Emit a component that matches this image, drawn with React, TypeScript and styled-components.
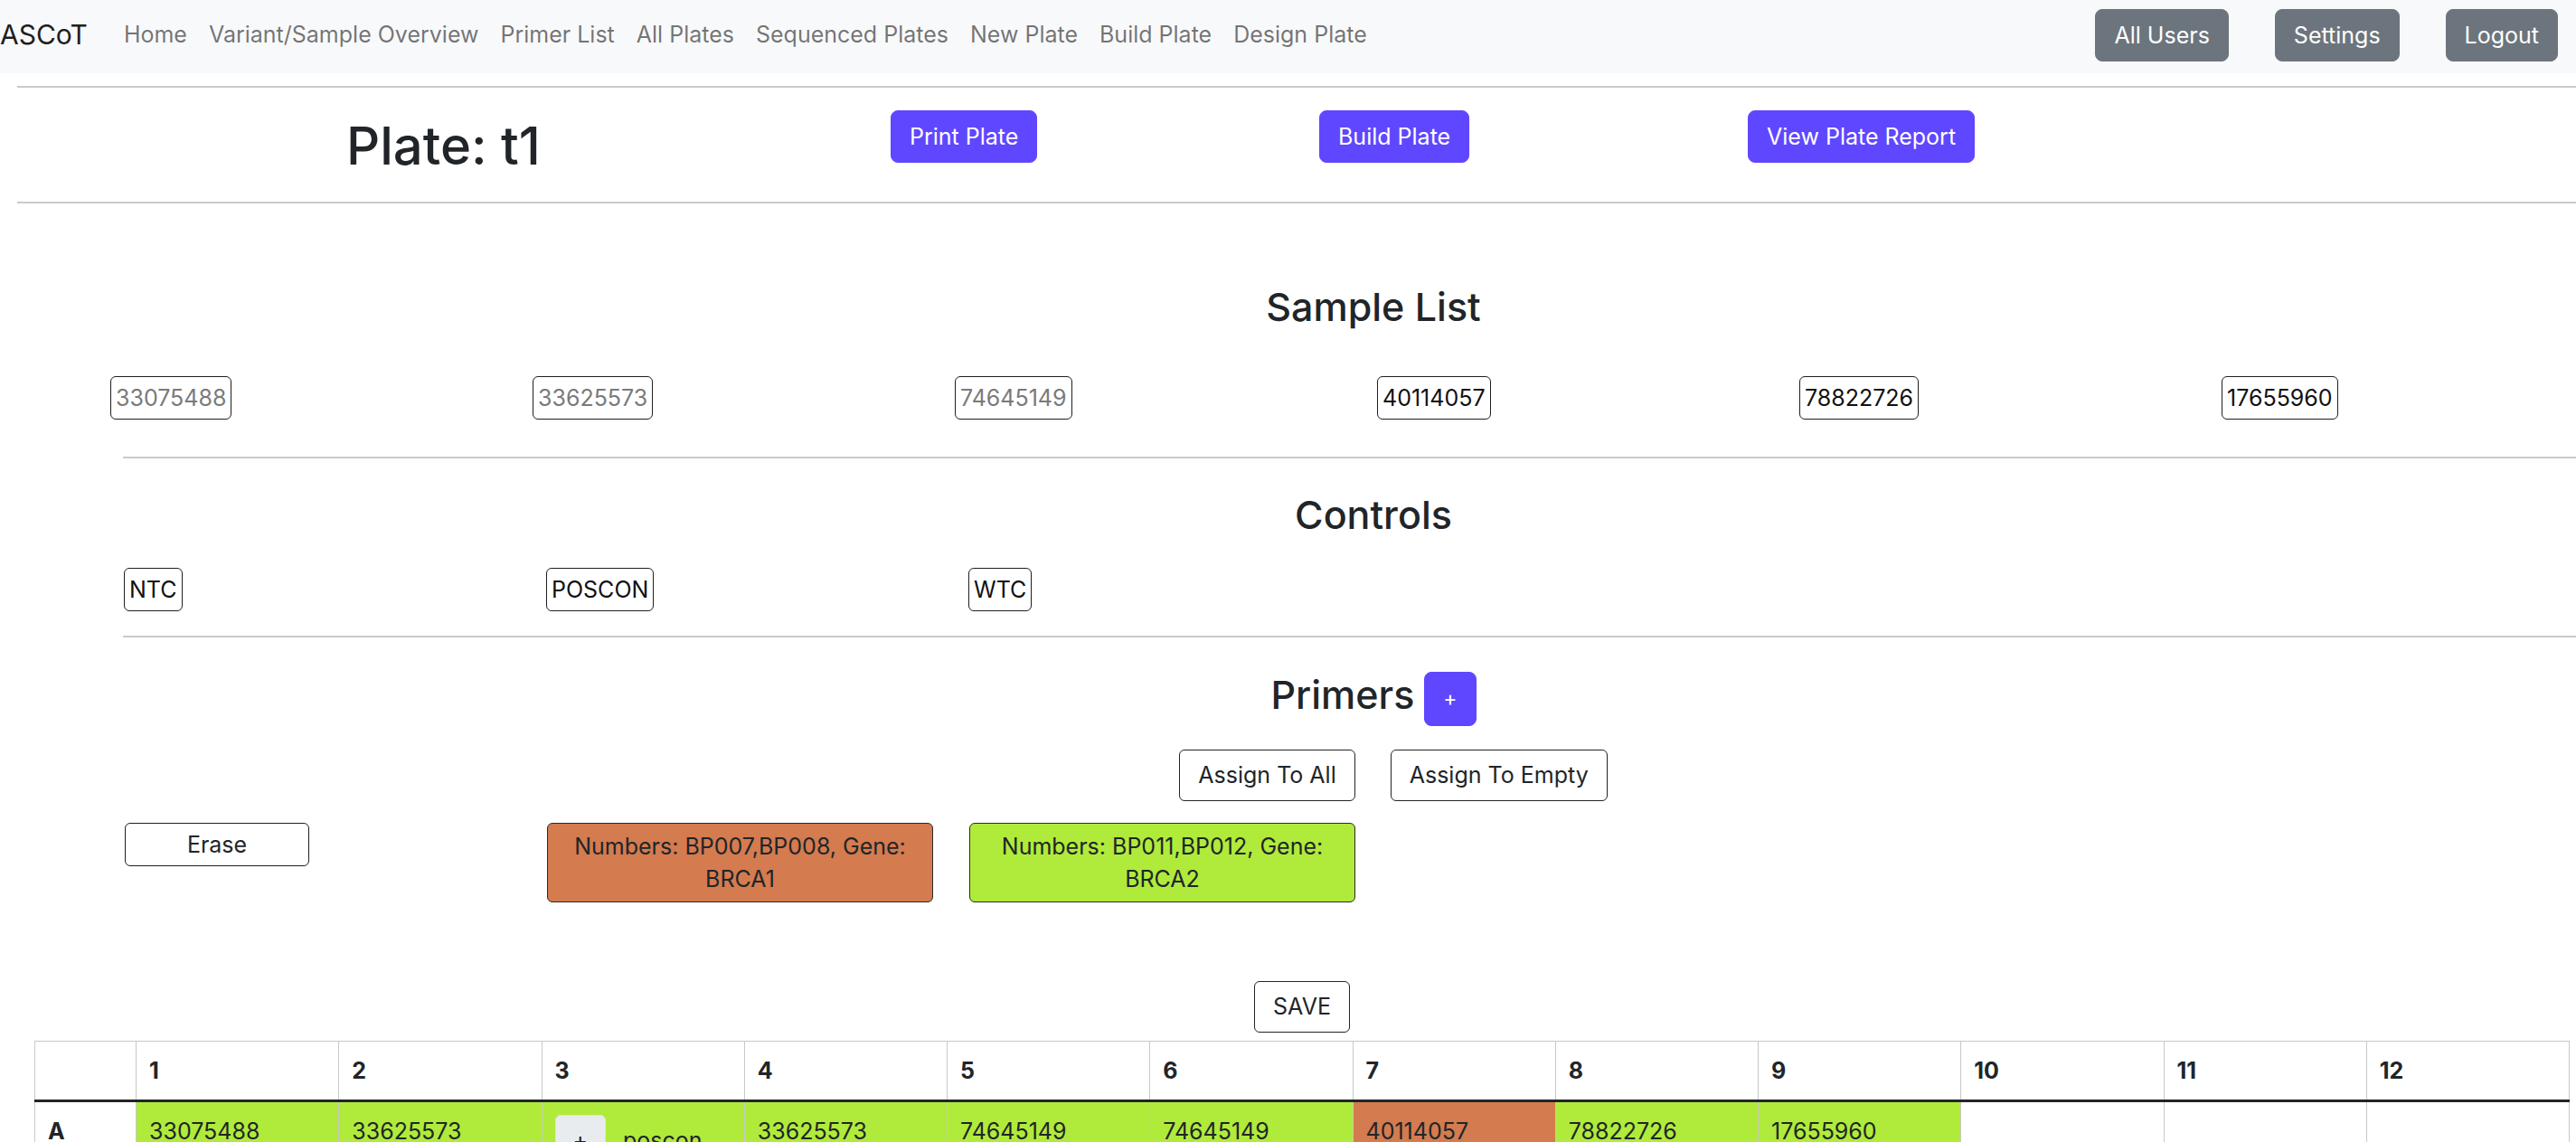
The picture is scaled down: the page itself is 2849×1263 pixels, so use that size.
import styled, { createGlobalStyle } from "styled-components";

const GlobalStyle = createGlobalStyle`
  html, body {
    margin: 0;
    padding: 0;
    overflow: hidden;
  }
  body {
    font-family: Inter, "Liberation Sans", sans-serif;
    font-size: 25px;
    line-height: 1.5;
    color: #212529;
    background: #fff;
  }
  * {
    box-sizing: border-box;
  }
`;

const PURPLE = "#5f47ff";
const GREEN = "#b0eb3b";
const ORANGE = "#d47b4f";

const Navbar = styled.nav`
  height: 81px;
  padding: 0 20px 4px 0;
  background: #f8f9fa;
  display: flex;
  align-items: center;
`;

const Brand = styled.a`
  font-size: 30px;
  color: rgba(0, 0, 0, 0.9);
  margin-right: 28px;
  text-decoration: none;
`;

const NavLink = styled.a`
  font-size: 25px;
  padding: 0 12px;
  color: rgba(0, 0, 0, 0.55);
  text-decoration: none;
`;

const NavButtons = styled.div`
  margin-left: auto;
  display: flex;
  gap: 51px;
`;

const Button = styled.button<{ $variant?: "gray" | "purple" | "outline" }>`
  font-family: inherit;
  font-size: 25px;
  line-height: 36px;
  padding: 10px 20px;
  border-radius: 8px;
  border: 1px solid
    ${(p) => (p.$variant === "gray" ? "#6c757d" : p.$variant === "purple" ? PURPLE : "#212529")};
  background: ${(p) => (p.$variant === "gray" ? "#6c757d" : p.$variant === "purple" ? PURPLE : "#fff")};
  color: ${(p) => (p.$variant === "outline" || !p.$variant ? "#212529" : "#fff")};
  cursor: pointer;
`;

const Rule = styled.div<{ $top: number }>`
  height: 2px;
  background: #c9cacb;
  margin-top: ${(p) => p.$top}px;
`;

const TopBlock = styled.div`
  margin-left: 19px;
`;

const PlateRow = styled.div`
  height: 126px;
  padding-left: 364px;
  display: grid;
  grid-template-columns: 602px 474px 474px auto;
  align-items: start;
  justify-items: start;
`;

const PlateTitle = styled.h1`
  margin: 28px 0 0;
  font-size: 58px;
  font-weight: 500;
  line-height: 72px;
`;

const HeaderButton = styled(Button)`
  margin-top: 25px;
`;

const Section = styled.div`
  margin-left: 136px;
  width: 2766px;
`;

const SectionTitle = styled.h3<{ $top: number }>`
  margin: ${(p) => p.$top}px 0 0;
  font-size: 43px;
  font-weight: 500;
  line-height: 52px;
  text-align: center;
`;

const ChipGrid = styled.div<{ $shift: number; $top: number }>`
  display: grid;
  grid-template-columns: repeat(6, 467px);
  justify-items: start;
  align-items: start;
  margin-left: ${(p) => p.$shift}px;
  margin-top: ${(p) => p.$top}px;
`;

const Chip = styled.button<{ $muted?: boolean }>`
  font-family: inherit;
  font-size: 25px;
  line-height: 36px;
  padding: 5px 5px;
  border: 1px solid #1f1f1f;
  border-radius: 6px;
  background: #fff;
  color: ${(p) => (p.$muted ? "#7a7a7a" : "#111")};
`;

const PrimersHead = styled.div`
  margin-top: 37px;
  display: flex;
  justify-content: center;
  align-items: flex-start;
  gap: 11px;
`;

const PrimersTitle = styled.h3`
  margin: 0;
  font-size: 43px;
  font-weight: 500;
  line-height: 52px;
`;

const PlusButton = styled(Button)`
  margin-top: 1px;
  padding: 11px 20px;
  font-size: 23px;
`;

const AssignRow = styled.div`
  margin-top: 26px;
  padding-left: 44px;
  display: flex;
  justify-content: center;
  gap: 39px;
`;

const AssignButton = styled(Button)`
  padding: 9px 20px 10px;
  border-radius: 6px;
`;

const EraseButton = styled(Chip)`
  width: 204px;
  color: #212529;
`;

const PrimerCard = styled.button<{ $color: string }>`
  width: 427px;
  font-family: inherit;
  font-size: 25px;
  line-height: 36px;
  padding: 7px 14px;
  border: 1px solid #2a2a2a;
  border-radius: 6px;
  background: ${(p) => p.$color};
  color: #212529;
  text-align: center;
`;

const TableArea = styled.div`
  margin-left: 38px;
  width: 2804px;
`;

const SaveRow = styled.div`
  margin-top: 87px;
  display: flex;
  justify-content: center;
`;

const PlateTable = styled.table`
  margin-top: 9px;
  width: 2804px;
  table-layout: fixed;
  border-collapse: collapse;
`;

const HeadCell = styled.th`
  padding: 14px;
  text-align: left;
  font-weight: 700;
  line-height: 36px;
  border: 1px solid #c8c8c8;
  border-bottom: 3px solid #212529;
`;

const RowLabel = styled.th`
  padding: 14px;
  text-align: left;
  vertical-align: top;
  font-weight: 700;
  line-height: 36px;
  border: 1px solid #c8c8c8;
`;

const Well = styled.td<{ $color?: string }>`
  padding: 14px;
  vertical-align: top;
  line-height: 36px;
  border: 1px solid #c8c8c8;
  background: ${(p) => p.$color ?? "#fff"};
  white-space: nowrap;
  overflow: hidden;
`;

const WellButton = styled.span`
  display: inline-block;
  padding: 9px 19px 10px;
  margin-right: 19px;
  border: 1px solid #dee2e6;
  border-radius: 6px;
  background: #e9ecef;
`;

const navLinks = [
  "Home",
  "Variant/Sample Overview",
  "Primer List",
  "All Plates",
  "Sequenced Plates",
  "New Plate",
  "Build Plate",
  "Design Plate",
];

const samples = ["33075488", "33625573", "74645149", "40114057", "78822726", "17655960"];
const controls = ["NTC", "POSCON", "WTC"];

type WellData = { label?: string; color?: string; control?: boolean };

const rowA: WellData[] = [
  { label: "33075488", color: GREEN },
  { label: "33625573", color: GREEN },
  { label: "poscon", color: GREEN, control: true },
  { label: "33625573", color: GREEN },
  { label: "74645149", color: GREEN },
  { label: "74645149", color: GREEN },
  { label: "40114057", color: ORANGE },
  { label: "78822726", color: GREEN },
  { label: "17655960", color: GREEN },
  {},
  {},
  {},
];

const rows: { name: string; wells: WellData[] }[] = [
  { name: "A", wells: rowA },
  ...["B", "C", "D", "E", "F", "G", "H"].map((name) => ({
    name,
    wells: Array.from({ length: 12 }, () => ({})),
  })),
];

const App = () => {
  return (
    <>
      <GlobalStyle />
      <Navbar>
        <Brand href="#">ASCoT</Brand>
        {navLinks.map((l) => (
          <NavLink key={l} href="#">
            {l}
          </NavLink>
        ))}
        <NavButtons>
          <Button $variant="gray">All Users</Button>
          <Button $variant="gray">Settings</Button>
          <Button $variant="gray">Logout</Button>
        </NavButtons>
      </Navbar>

      <TopBlock>
        <Rule $top={14} />
        <PlateRow>
          <PlateTitle>Plate: t1</PlateTitle>
          <HeaderButton $variant="purple">Print Plate</HeaderButton>
          <HeaderButton $variant="purple">Build Plate</HeaderButton>
          <HeaderButton $variant="purple">View Plate Report</HeaderButton>
        </PlateRow>
        <Rule $top={0} />
      </TopBlock>

      <Section>
        <SectionTitle $top={88}>Sample List</SectionTitle>
        <ChipGrid $shift={-14} $top={51}>
          {samples.map((s, i) => (
            <Chip key={s} $muted={i < 3}>
              {s}
            </Chip>
          ))}
        </ChipGrid>
        <Rule $top={41} />

        <SectionTitle $top={36}>Controls</SectionTitle>
        <ChipGrid $shift={1} $top={33}>
          {controls.map((c) => (
            <Chip key={c}>{c}</Chip>
          ))}
        </ChipGrid>
        <Rule $top={27} />

        <PrimersHead>
          <PrimersTitle>Primers</PrimersTitle>
          <PlusButton $variant="purple">+</PlusButton>
        </PrimersHead>
        <AssignRow>
          <AssignButton>Assign To All</AssignButton>
          <AssignButton>Assign To Empty</AssignButton>
        </AssignRow>
        <ChipGrid $shift={2} $top={24}>
          <EraseButton>Erase</EraseButton>
          <PrimerCard $color={ORANGE}>Numbers: BP007,BP008, Gene: BRCA1</PrimerCard>
          <PrimerCard $color={GREEN}>Numbers: BP011,BP012, Gene: BRCA2</PrimerCard>
        </ChipGrid>
      </Section>

      <TableArea>
        <SaveRow>
          <AssignButton>SAVE</AssignButton>
        </SaveRow>
        <PlateTable>
          <colgroup>
            <col style={{ width: 112 }} />
            {Array.from({ length: 12 }, (_, i) => (
              <col key={i} />
            ))}
          </colgroup>
          <thead>
            <tr>
              <HeadCell />
              {Array.from({ length: 12 }, (_, i) => (
                <HeadCell key={i}>{i + 1}</HeadCell>
              ))}
            </tr>
          </thead>
          <tbody>
            {rows.map((r) => (
              <tr key={r.name}>
                <RowLabel>{r.name}</RowLabel>
                {r.wells.map((w, i) => (
                  <Well key={i} $color={w.color}>
                    {w.control && <WellButton>+</WellButton>}
                    {w.label}
                  </Well>
                ))}
              </tr>
            ))}
          </tbody>
        </PlateTable>
      </TableArea>
    </>
  );
};

export default App;
